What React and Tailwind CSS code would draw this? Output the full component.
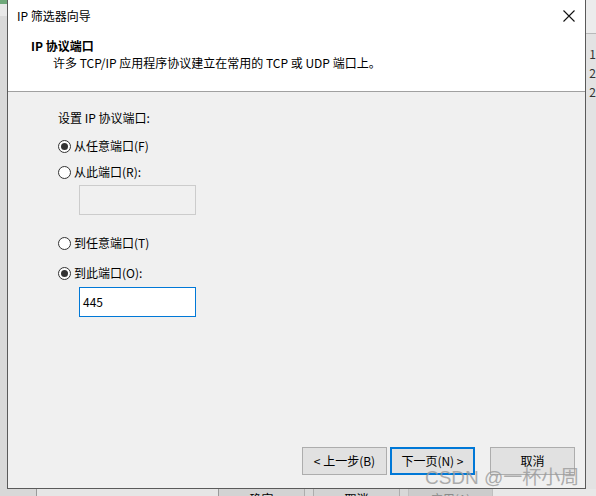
import React from 'react';

const font = { fontFamily: '"Microsoft YaHei UI", "Noto Sans CJK SC", "Noto Sans", sans-serif' };

function Radio({ checked, label }) {
  return (
    <div className="flex items-center h-[16px]">
      <span className="w-[13px] h-[13px] rounded-full border border-[#333] bg-white flex items-center justify-center">
        {checked && <span className="w-[7px] h-[7px] rounded-full bg-[#333]" />}
      </span>
      <span className="ml-[3px] text-[12px] text-black leading-none">{label}</span>
    </div>
  );
}

function Btn({ children, primary }) {
  return (
    <button
      className={
        'h-[28px] w-[85px] bg-[#e1e1e1] text-[12px] text-black flex items-center justify-center ' +
        (primary ? 'border-2 border-[#0078d7]' : 'border border-[#adadad]')
      }
    >
      {children}
    </button>
  );
}

export default function App() {
  return (
    <div className="w-[596px] h-[496px] overflow-hidden bg-[#dcdcdc] flex flex-col" style={font}>
      <div className="flex h-[489px]">
        {/* window behind, left */}
        <div className="w-[7px] flex flex-col bg-[#d6d6d6]">
          <div className="h-[4px] bg-[#6fa87a]" />
          <div className="h-[12px] bg-[#e8e8e8]" />
          <div className="flex-1 bg-[#d9d9d9]" />
        </div>

        {/* dialog */}
        <div className="w-[582px] flex flex-col border-l border-r border-b border-[#5a5a5a] bg-[#f0f0f0]">
          <div className="h-[92px] bg-white border-b border-[#a0a0a0] flex flex-col">
            <div className="flex items-start justify-between h-[38px] pl-[9px] pr-[10px] pt-[7px]">
              <span className="text-[12px] text-black">IP 筛选器向导</span>
              <svg width="12" height="12" viewBox="0 0 12 12" className="mt-[3px]">
                <path d="M0.5 0.5 L11.5 11.5 M11.5 0.5 L0.5 11.5" stroke="#111" strokeWidth="1.1" />
              </svg>
            </div>
            <div className="pl-[23px] text-[12px] font-bold text-black leading-[16px]">IP 协议端口</div>
            <div className="pl-[45px] text-[12px] text-black leading-[16px] mt-[1px]">
              许多 TCP/IP 应用程序协议建立在常用的 TCP 或 UDP 端口上。
            </div>
          </div>

          <div className="flex-1 flex flex-col pl-[50px] pt-[18px]">
            <div className="text-[12px] text-black leading-[16px]">设置 IP 协议端口:</div>
            <div className="mt-[12px]">
              <Radio checked label="从任意端口(F)" />
            </div>
            <div className="mt-[10px]">
              <Radio label="从此端口(R):" />
            </div>
            <div className="ml-[21px] mt-[5px] w-[117px] h-[30px] border border-[#cccccc] bg-[#f0f0f0]" />
            <div className="mt-[20px]">
              <Radio label="到任意端口(T)" />
            </div>
            <div className="mt-[14px]">
              <Radio checked label="到此端口(O):" />
            </div>
            <div className="ml-[21px] mt-[6px] w-[117px] h-[30px] border border-[#0078d7] bg-white flex items-center pl-[3px] text-[12px] text-black">
              445
            </div>

            <div className="flex-1" />
            <div className="flex pb-[13px] pl-[244px]">
              <Btn>&lt; 上一步(B)</Btn>
              <div className="ml-[3px]">
                <Btn primary>下一页(N) &gt;</Btn>
              </div>
              <div className="ml-[15px]">
                <Btn>取消</Btn>
              </div>
            </div>
          </div>
          <div className="relative h-0">
            <span className="absolute right-[6px] bottom-[1px] text-[19px] text-[#9a9a9a] opacity-80 whitespace-nowrap leading-none" style={{ fontFamily: '"Liberation Sans", "Noto Sans CJK SC", sans-serif' }}>
              CSDN @一杯小周
            </span>
          </div>
        </div>

        {/* window behind, right */}
        <div className="flex-1 flex flex-col bg-[#e3e3e3]">
          <div className="h-[34px] bg-[#ececec] border-b border-[#b9b9b9]" />
          <div className="flex flex-col pl-[3px] pt-[10px] text-[12px] leading-[19px] text-[#333]">
            <span>1</span>
            <span>2</span>
            <span>2</span>
          </div>
        </div>
      </div>

      {/* window behind, bottom */}
      <div className="flex-1 flex bg-[#d8d8d8] overflow-hidden">
        <div className="w-[37px] border-r border-[#9a9a9a]" />
        <div className="w-[182px] bg-[#e6e6e6] border-r border-[#9a9a9a]" />
        <div className="w-[86px] bg-[#d3d3d3] border-r border-[#adadad] flex justify-center">
          <span className="text-[12px] leading-none mt-[4px] text-black">确定</span>
        </div>
        <div className="w-[8px]" />
        <div className="w-[87px] bg-[#d3d3d3] border-l border-r border-[#adadad] flex justify-center">
          <span className="text-[12px] leading-none mt-[4px] text-black">取消</span>
        </div>
        <div className="w-[8px]" />
        <div className="w-[85px] bg-[#cccccc] border-l border-r border-[#bfbfbf] flex justify-center">
          <span className="text-[12px] leading-none mt-[4px] text-[#8a8a8a]">应用(A)</span>
        </div>
        <div className="flex-1 bg-[#e8e8e8]" />
      </div>
    </div>
  );
}
